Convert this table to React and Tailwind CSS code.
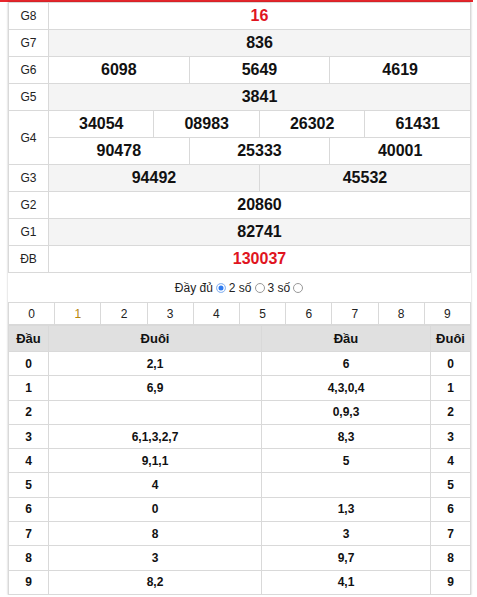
import React from 'react';

const prizes = [
  { label: 'G8', rows: [['16']], red: true },
  { label: 'G7', rows: [['836']] },
  { label: 'G6', rows: [['6098', '5649', '4619']] },
  { label: 'G5', rows: [['3841']] },
  { label: 'G4', rows: [['34054', '08983', '26302', '61431'], ['90478', '25333', '40001']] },
  { label: 'G3', rows: [['94492', '45532']] },
  { label: 'G2', rows: [['20860']] },
  { label: 'G1', rows: [['82741']] },
  { label: 'ĐB', rows: [['130037']], red: true },
];

const loto = [
  ['0', '2,1', '6', '0'],
  ['1', '6,9', '4,3,0,4', '1'],
  ['2', '', '0,9,3', '2'],
  ['3', '6,1,3,2,7', '8,3', '3'],
  ['4', '9,1,1', '5', '4'],
  ['5', '4', '', '5'],
  ['6', '0', '1,3', '6'],
  ['7', '8', '3', '7'],
  ['8', '3', '9,7', '8'],
  ['9', '8,2', '4,1', '9'],
];

const Prizes = () => (
  <table className="w-full table-fixed border-collapse">
    <colgroup>
      <col className="w-[40px]" />
      {Array.from({ length: 12 }).map((_, i) => <col key={i} />)}
    </colgroup>
    <tbody>
      {prizes.map((p, idx) =>
        p.rows.map((r, ri) => (
          <tr key={p.label + ri} className={idx % 2 === 1 ? 'bg-[#f4f4f4]' : 'bg-white'}>
            {ri === 0 && (
              <td rowSpan={p.rows.length} className="border border-[#d9d9d9] text-center text-[12px] text-[#222] bg-white">
                {p.label}
              </td>
            )}
            {r.map((n) => (
              <td
                key={n}
                colSpan={12 / r.length}
                className={`h-[27px] border border-[#d9d9d9] text-center text-[16px] font-bold leading-none ${p.red ? 'text-[#e0141e]' : 'text-[#111]'}`}
              >
                {n}
              </td>
            ))}
          </tr>
        ))
      )}
    </tbody>
  </table>
);

const Radio = ({ on }) => (
  <span className={`inline-block w-[10px] h-[10px] rounded-full border mx-[1px] ${on ? 'border-[#9cc0f2] bg-[#2f7bf0] ring-[1.5px] ring-inset ring-white' : 'border-[#999] bg-white'}`} />
);

const Loto = () => (
  <div>
    <div className="h-[29px] flex items-center justify-center gap-[2px] text-[12px] text-[#222]">
      <span>Đầy đủ</span>
      <Radio on />
      <span>2 số</span>
      <Radio />
      <span>3 số</span>
      <Radio />
    </div>
    <table className="w-full table-fixed border-collapse">
      <tbody>
        <tr>
          {Array.from({ length: 10 }).map((_, i) => (
            <td key={i} className={`h-[22px] border border-[#d9d9d9] text-center text-[12px] ${i === 1 ? 'text-[#b8860b]' : 'text-[#222]'}`}>
              {i}
            </td>
          ))}
        </tr>
      </tbody>
    </table>
    <table className="w-full table-fixed border-collapse">
      <colgroup>
        <col className="w-[40px]" />
        <col className="w-[213px]" />
        <col className="w-[169px]" />
        <col className="w-[40px]" />
      </colgroup>
      <thead>
        <tr className="bg-[#e0e0e0] text-[13px] font-bold text-[#111]">
          <td className="h-[26px] border border-[#d9d9d9] text-center">Đầu</td>
          <td className="border border-[#d9d9d9] text-center">Đuôi</td>
          <td className="border border-[#d9d9d9] text-center">Đầu</td>
          <td className="border border-[#d9d9d9] text-center">Đuôi</td>
        </tr>
      </thead>
      <tbody>
        {loto.map((r) => (
          <tr key={r[0]} className="text-[12px] font-bold text-[#111]">
            {r.map((c, i) => (
              <td key={i} className="h-[24.3px] border border-[#d9d9d9] text-center">{c}</td>
            ))}
          </tr>
        ))}
      </tbody>
    </table>
  </div>
);

export default function App() {
  return (
    <div className="w-[477px] bg-white font-['Liberation_Sans',Arial,sans-serif]">
      <div className="h-[2px] w-[473px] bg-[#e8262c]" />
      <div className="ml-[8px] w-[463px] shadow-[0_0_2px_rgba(0,0,0,0.25)]">
        <Prizes />
        <Loto />
      </div>
    </div>
  );
}
